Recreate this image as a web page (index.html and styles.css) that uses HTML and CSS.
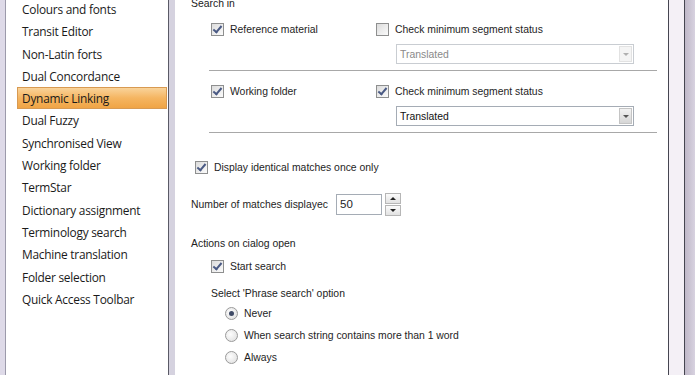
FILE: index.html
```html
<!DOCTYPE html>
<html lang="en">
<head>
    <meta charset="UTF-8">
    <title>Options</title>
    <link rel="stylesheet" href="styles.css">
</head>
<body>
<div class="nav">
    <ul class="nav-list">
        <li>Colours and fonts</li>
        <li>Transit Editor</li>
        <li>Non-Latin forts</li>
        <li>Dual Concordance</li>
        <li class="active">Dynamic Linking</li>
        <li>Dual Fuzzy</li>
        <li>Synchronised View</li>
        <li>Working folder</li>
        <li>TermStar</li>
        <li>Dictionary assignment</li>
        <li>Terminology search</li>
        <li>Machine translation</li>
        <li>Folder selection</li>
        <li>Quick Access Toolbar</li>
    </ul>
</div>
<div class="gutter"></div>

<div class="main">
    <div class="caption top">Search in</div>

    <div class="group">
        <div class="col-left">
            <label class="check"><span class="box on"></span>Reference material</label>
        </div>
        <div class="col-right">
            <label class="check"><span class="box"></span>Check minimum segment status</label>
            <div class="combo disabled"><span>Translated</span><span class="arrow"></span></div>
        </div>
    </div>
    <div class="sep"></div>

    <div class="group">
        <div class="col-left">
            <label class="check"><span class="box on"></span>Working folder</label>
        </div>
        <div class="col-right">
            <label class="check"><span class="box on"></span>Check minimum segment status</label>
            <div class="combo"><span>Translated</span><span class="arrow"></span></div>
        </div>
    </div>
    <div class="sep"></div>

    <label class="check single"><span class="box on"></span>Display identical matches once only</label>

    <div class="number-row">
        <span class="number-label">Number of matches displayec</span>
        <div class="spin-input">50</div>
        <div class="spin">
            <span class="up"></span>
            <span class="down"></span>
        </div>
    </div>

    <div class="caption actions">Actions on cialog open</div>
    <label class="check indent"><span class="box on"></span>Start search</label>
    <div class="caption indent phrase">Select 'Phrase search' option</div>
    <div class="radios">
        <label class="radio"><span class="dot on"></span>Never</label>
        <label class="radio"><span class="dot"></span>When search string contains more than 1 word</label>
        <label class="radio"><span class="dot"></span>Always</label>
    </div>
</div>

<div class="scroll"></div>
<div class="edge"></div>
</body>
</html>
```

FILE: styles.css
```css
body {
    margin: 0;
    height: 375px;
    overflow: hidden;
    display: flex;
    background-color: #dedae8;
    font-family: "Liberation Sans", Arial, sans-serif;
    font-size: 10.4px;
    color: #1e1e1e;
    white-space: nowrap;
}

.nav {
    margin-left: 5px;
    width: 162px;
    background-color: #fff;
    border-left: 1px solid #9c9aab;
    border-right: 1px solid #5a5a66;
}

.nav-list {
    list-style: none;
    margin: -2px 0 0;
    padding: 0;
    font-family: "Open Sans", sans-serif;
    font-size: 11.9px;
    letter-spacing: -0.25px;
}

.nav-list li {
    height: 22.3px;
    line-height: 22px;
    margin-left: 11px;
    margin-right: 1px;
    padding-left: 5px;
    box-sizing: border-box;
    color: #1a1a1a;
}

.nav-list li.active {
    background: linear-gradient(#f9d39a, #f5b561 50%, #f0a445);
    border: 1px solid #d89a52;
    line-height: 20px;
    padding-left: 4px;
}

.gutter {
    width: 6px;
    background-color: #d5d2df;
}

.main {
    width: 477px;
    padding-left: 16px;
    background-color: #fff;
    border-right: 1px solid #454550;
}

.caption {
    color: #222;
    line-height: 13px;
    height: 13px;
}

.caption.top {
    margin-top: -3px;
}

.group {
    display: flex;
    padding-left: 20px;
    padding-top: 12px;
}

.col-left {
    width: 165px;
}

.check {
    display: flex;
    align-items: center;
    height: 14px;
}

.box {
    width: 11px;
    height: 11px;
    border: 1px solid #8e8f8f;
    background: linear-gradient(135deg, #dcdcdc, #fbfbfb);
    margin-right: 6px;
    position: relative;
    flex: none;
}

.box.on::after {
    content: "";
    position: absolute;
    left: 3px;
    top: 0px;
    width: 3px;
    height: 7px;
    border: solid #4a5a84;
    border-width: 0 2px 2px 0;
    transform: rotate(40deg);
}

.combo {
    margin-top: 8px;
    margin-left: 20px;
    width: 233px;
    height: 18px;
    border: 1px solid #a5acb5;
    display: flex;
    justify-content: space-between;
    align-items: center;
    padding-left: 3px;
    color: #111;
}

.combo.disabled {
    color: #8a8a8a;
    border-color: #c9cdd2;
}

.arrow {
    width: 13px;
    height: 16px;
    margin-right: 1px;
    background: linear-gradient(#f2f2f2, #d6d6d6);
    border: 1px solid #c4c4c4;
    box-sizing: border-box;
    position: relative;
}

.arrow::after {
    content: "";
    position: absolute;
    left: 3px;
    top: 6px;
    border-left: 3px solid transparent;
    border-right: 3px solid transparent;
    border-top: 3px solid #555;
}

.combo.disabled .arrow {
    background: #f4f4f4;
    border-color: #e2e2e2;
}

.combo.disabled .arrow::after {
    border-top-color: #b0b0b0;
}

.sep {
    margin: 6px 11px 0 18px;
    border-top: 1px solid #a8a8a8;
    border-bottom: 1px solid #fff;
}

.check.single {
    margin-top: 26px;
    margin-left: 4px;
}

.number-row {
    display: flex;
    align-items: center;
    margin-top: 19px;
    height: 22px;
}

.number-label {
    width: 145px;
}

.spin-input {
    width: 41px;
    height: 19px;
    border: 1px solid #a5acb5;
    padding-left: 3px;
    line-height: 19px;
    font-size: 11.5px;
}

.spin {
    margin-left: 3px;
    display: flex;
    flex-direction: column;
    gap: 1px;
}

.spin span {
    width: 14px;
    height: 9px;
    border: 1px solid #b6b6b6;
    background: linear-gradient(#fbfbfb, #e2e2e2);
    position: relative;
}

.spin span::after {
    content: "";
    position: absolute;
    left: 4px;
    top: 3px;
    border-left: 3px solid transparent;
    border-right: 3px solid transparent;
}

.spin .up::after {
    border-bottom: 3px solid #222;
}

.spin .down::after {
    border-top: 3px solid #222;
}

.caption.actions {
    margin-top: 22px;
}

.indent {
    margin-left: 20px;
}

.check.indent {
    margin-top: 9px;
}

.caption.phrase {
    margin-top: 14px;
}

.radios {
    margin-left: 34px;
    margin-top: 6px;
    display: flex;
    flex-direction: column;
    gap: 8px;
}

.radio {
    display: flex;
    align-items: center;
    height: 14px;
}

.dot {
    width: 11px;
    height: 11px;
    border: 1px solid #9a9a9a;
    border-radius: 50%;
    background: radial-gradient(circle at 40% 40%, #fdfdfd, #dcdcdc);
    margin-right: 6px;
    position: relative;
}

.dot.on::after {
    content: "";
    position: absolute;
    left: 3px;
    top: 3px;
    width: 5px;
    height: 5px;
    border-radius: 50%;
    background: #3f4a66;
}

.scroll {
    width: 15px;
    background-color: #f4f0f6;
    border-right: 1px solid #454550;
}

.edge {
    flex: 1;
    background: linear-gradient(90deg, #bfb8c8, #d8d2e0);
}
```
